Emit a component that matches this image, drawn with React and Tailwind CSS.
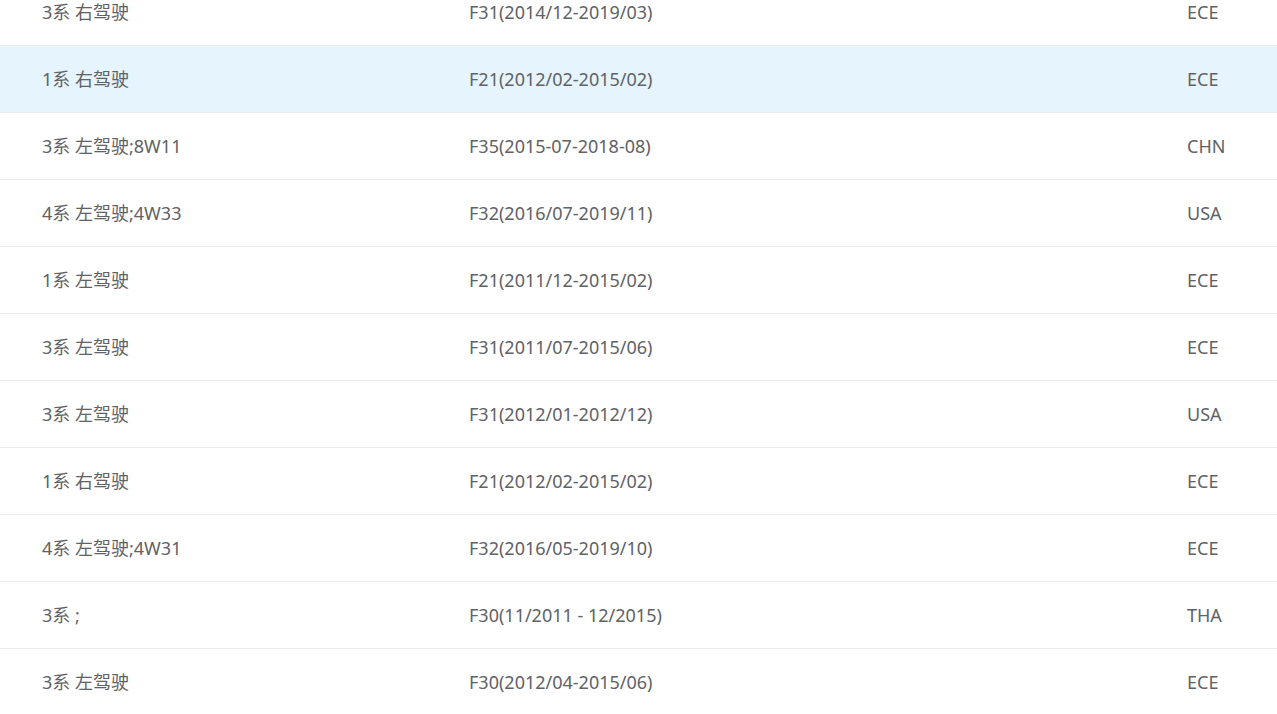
import React from "react";

const rows = [
  ["3系 右驾驶", "F31(2014/12-2019/03)", "ECE"],
  ["1系 右驾驶", "F21(2012/02-2015/02)", "ECE", true],
  ["3系 左驾驶;8W11", "F35(2015-07-2018-08)", "CHN"],
  ["4系 左驾驶;4W33", "F32(2016/07-2019/11)", "USA"],
  ["1系 左驾驶", "F21(2011/12-2015/02)", "ECE"],
  ["3系 左驾驶", "F31(2011/07-2015/06)", "ECE"],
  ["3系 左驾驶", "F31(2012/01-2012/12)", "USA"],
  ["1系 右驾驶", "F21(2012/02-2015/02)", "ECE"],
  ["4系 左驾驶;4W31", "F32(2016/05-2019/10)", "ECE"],
  ["3系 ;", "F30(11/2011 - 12/2015)", "THA"],
  ["3系 左驾驶", "F30(2012/04-2015/06)", "ECE"],
];

export default function App() {
  return (
    <div
      className="w-[1277px] h-[714px] overflow-hidden bg-white text-[#606266] text-[18px]"
      style={{ fontFamily: '"Noto Sans", "Noto Sans CJK SC", sans-serif' }}
    >
      <div className="-mt-[21px]">
        {rows.map((r, i) => (
          <div
            key={i}
            className={`grid grid-cols-[469px_718px_1fr] h-[67px] items-center border-b border-[#e9ecf0] ${
              r[3] ? "bg-[#e5f4fd]" : "bg-white"
            }`}
          >
            <div className="pl-[42px] whitespace-nowrap">{r[0]}</div>
            <div className="whitespace-nowrap">{r[1]}</div>
            <div className="whitespace-nowrap">{r[2]}</div>
          </div>
        ))}
      </div>
    </div>
  );
}
